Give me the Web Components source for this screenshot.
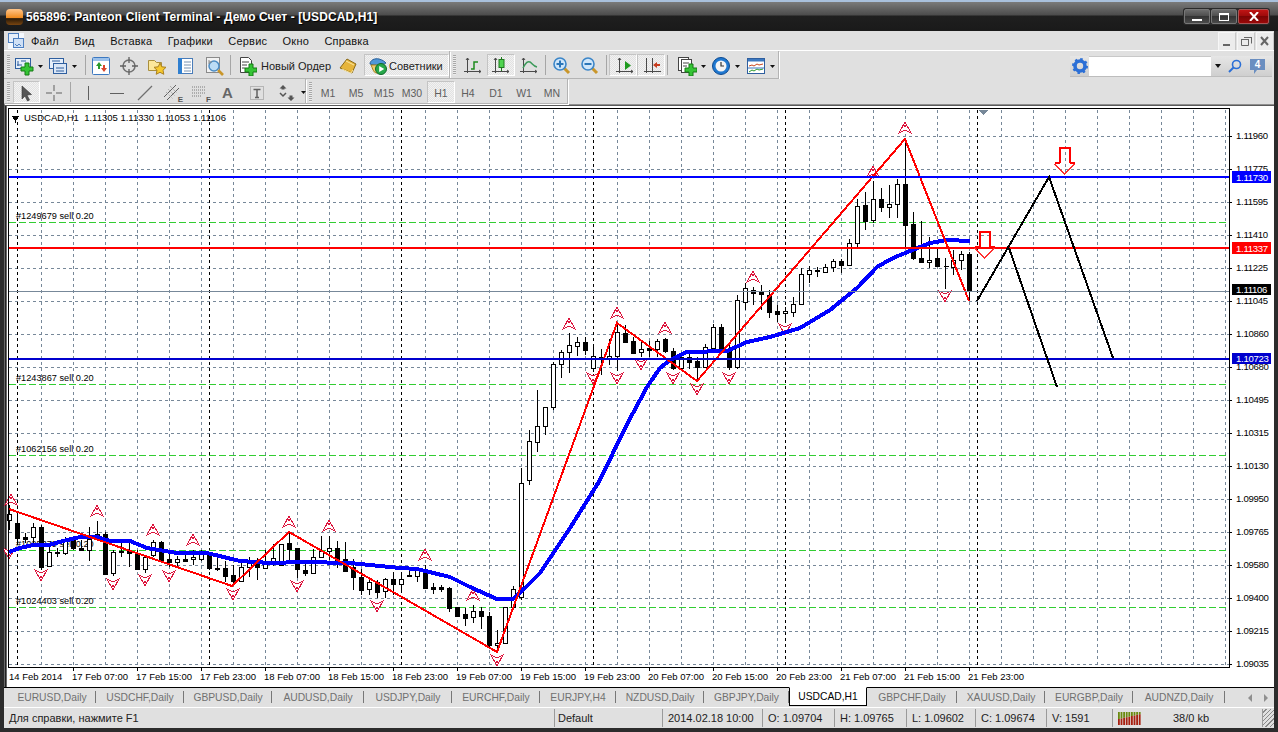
<!DOCTYPE html>
<html>
<head>
<meta charset="utf-8">
<style>
html,body{margin:0;padding:0;background:#2c2c2c;overflow:hidden;}
body{width:1278px;height:732px;display:flex;flex-direction:column;font-family:"Liberation Sans",Arial,sans-serif;font-size:11px;}
</style>
</head>
<body>
<mt-titlebar>565896: Panteon Client Terminal - Демо Счет - [USDCAD,H1]</mt-titlebar>
<mt-menubar>
  <span>Файл</span><span>Вид</span><span>Вставка</span><span>Графики</span><span>Сервис</span><span>Окно</span><span>Справка</span>
</mt-menubar>
<mt-toolrow>
  <mt-toolbar w="446">
    <tb-grip></tb-grip>
    <tb-btn icon="newchart" w="34" pad="1" caret></tb-btn>
    <tb-btn icon="profiles" w="36" pad="1" caret></tb-btn>
    <tb-sep></tb-sep>
    <tb-btn icon="market" w="27" pad="3"></tb-btn>
    <tb-btn icon="target" w="29"></tb-btn>
    <tb-btn icon="folder" w="28" pad="3"></tb-btn>
    <tb-btn icon="book" w="28" pad="3"></tb-btn>
    <tb-btn icon="magdoc" w="28"></tb-btn>
    <tb-sep></tb-sep>
    <tb-btn icon="order" w="100">Новый Ордер</tb-btn>
    <tb-btn icon="tag" w="31" pad="5"></tb-btn>
    <tb-btn icon="experts" w="85" pad="3" tight pressed>Советники</tb-btn>
  </mt-toolbar>
  <mt-toolbar w="329">
    <tb-grip></tb-grip>
    <tb-btn icon="bars" w="28"></tb-btn>
    <tb-btn icon="candle" w="28" pad="3" pressed></tb-btn>
    <tb-btn icon="linechart" w="28"></tb-btn>
    <tb-sep></tb-sep>
    <tb-btn icon="zoomin" w="28"></tb-btn>
    <tb-btn icon="zoomout" w="28"></tb-btn>
    <tb-sep></tb-sep>
    <tb-btn icon="autoscroll" w="28" pad="5" pressed></tb-btn>
    <tb-btn icon="shift" w="28" pad="5" pressed></tb-btn>
    <tb-sep></tb-sep>
    <tb-btn icon="template" w="36" pad="7" caret></tb-btn>
    <tb-btn icon="clock" w="37" pad="5" caret></tb-btn>
    <tb-btn icon="indicator" w="33" pad="3" caret></tb-btn>
  </mt-toolbar>
  <mt-search></mt-search>
</mt-toolrow>
<mt-toolrow second>
  <mt-toolbar w="302">
    <tb-grip></tb-grip>
    <tb-btn icon="cursor" w="27" pad="2" pressed></tb-btn>
    <tb-btn icon="cross" w="28"></tb-btn>
    <tb-sep></tb-sep>
    <tb-btn icon="vline" w="28" pad="5"></tb-btn>
    <tb-btn icon="hline" w="28" pad="6"></tb-btn>
    <tb-btn icon="trend" w="28" pad="6"></tb-btn>
    <tb-btn icon="channel" w="28" pad="5"></tb-btn>
    <tb-btn icon="fibo" w="28" pad="5"></tb-btn>
    <tb-btn icon="letter" w="28" pad="5"></tb-btn>
    <tb-btn icon="textbox" w="28" pad="6"></tb-btn>
    <tb-btn icon="arrows" w="36" pad="8" caret></tb-btn>
  </mt-toolbar>
  <mt-toolbar w="262">
    <tb-grip></tb-grip>
    <tb-btn w="28" tf>M1</tb-btn>
    <tb-btn w="28" tf>M5</tb-btn>
    <tb-btn w="28" tf>M15</tb-btn>
    <tb-btn w="28" tf>M30</tb-btn>
    <tb-btn w="28" tf pressed>H1</tb-btn>
    <tb-btn w="28" tf>H4</tb-btn>
    <tb-btn w="28" tf>D1</tb-btn>
    <tb-btn w="28" tf>W1</tb-btn>
    <tb-btn w="28" tf>MN</tb-btn>
  </mt-toolbar>
</mt-toolrow>
<mt-chart></mt-chart>
<mt-tabs>
  <mt-tab w="88">EURUSD,Daily</mt-tab><mt-tab w="88">USDCHF,Daily</mt-tab><mt-tab w="88">GBPUSD,Daily</mt-tab><mt-tab w="92">AUDUSD,Daily</mt-tab><mt-tab w="88">USDJPY,Daily</mt-tab><mt-tab w="88">EURCHF,Daily</mt-tab><mt-tab w="76">EURJPY,H4</mt-tab><mt-tab w="88">NZDUSD,Daily</mt-tab><mt-tab w="85">GBPJPY,Daily</mt-tab><mt-tab w="78" active>USDCAD,H1</mt-tab><mt-tab w="90">GBPCHF,Daily</mt-tab><mt-tab w="88">XAUUSD,Daily</mt-tab><mt-tab w="88">EURGBP,Daily</mt-tab><mt-tab w="92">AUDNZD,Daily</mt-tab>
</mt-tabs>
<mt-status></mt-status>

<script>
const plus = (x,y) => `<path d="M${x-2} ${y-6}h4v4h4v4h-4v4h-4v-4h-4v-4h4z" fill="#35c435" stroke="#147a14"/>`
const axes = `<path d="M4.5 2v15M1 15.5h17" stroke="#4a4a4a" fill="none"/><path d="M3 4l1.5-2 1.5 2M16 14l2 1.5-2 1.5" stroke="#4a4a4a" fill="none"/>`
const lens = (sign) => `<path d="M12 12l5 5" stroke="#c9962a" stroke-width="3"/><circle cx="8" cy="8" r="6" fill="#cfe6fa" stroke="#3c86c8" stroke-width="1.6"/>${sign}`
const ICONS = {
  newchart:`<rect x="1.5" y="2.5" width="15" height="10" fill="#e6effa" stroke="#2f5f9f"/><path d="M4 5v5M3 9h5M7 5h5" stroke="#2f5f9f" fill="none"/>${plus(13,13)}`,
  profiles:`<rect x="1.5" y="2.5" width="14" height="10" fill="#e6effa" stroke="#2f5f9f"/><rect x="5.5" y="7.5" width="13" height="10" fill="#dbe7f6" stroke="#2f5f9f"/><path d="M4 5h8M8 12h8M8 15h8" stroke="#2f5f9f"/>`,
  market:`<rect x="1.5" y="1.5" width="17" height="17" rx="1" fill="#fff" stroke="#3c78c0"/><rect x="2" y="2" width="16" height="3" fill="#9cc1ea"/><path d="M8 6l3 4H9v3H7v-3H5z" fill="#2a9a2a"/><path d="M12 9h2v3h2l-3 4-3-4h2z" fill="#d8452a"/>`,
  target:`<circle cx="10" cy="10" r="6" fill="none" stroke="#707070" stroke-width="1.5"/><path d="M10 1v6M10 13v6M1 10h6M13 10h6" stroke="#606060" stroke-width="1.3"/>`,
  folder:`<path d="M1.5 4.5h6l2 2h5v8h-13z" fill="#fbe79a" stroke="#a98f3c"/><path d="M13 7l1.8 3.8 4.2.5-3 2.9.8 4.1-3.8-2-3.8 2 .8-4.1-3-2.9 4.2-.5z" fill="#f6c92e" stroke="#a98020"/>`,
  book:`<rect x="3.5" y="2.5" width="14" height="15" fill="#fff" stroke="#4a7cb8"/><rect x="3" y="2" width="4" height="16" fill="#2f7fd0"/><path d="M9 6h7M9 9h7M9 12h7M9 15h7" stroke="#7a93b0"/>`,
  magdoc:`<rect x="2.5" y="1.5" width="13" height="15" fill="#f2f2f2" stroke="#8a8a8a"/><path d="M14 14l5 5" stroke="#c9962a" stroke-width="2.6"/><circle cx="10" cy="10" r="5" fill="#bcdcf5" stroke="#4c8cc4" stroke-width="1.5"/><path d="M5 4v4M5 6h3" stroke="#8a8a8a"/>`,
  order:`<path d="M3.5 1.5h8l3 3v12h-11z" fill="#fff" stroke="#444"/><path d="M5 6h7M5 9h5M5 12h3" stroke="#444"/>${plus(14,14)}`,
  tag:`<path d="M2 12L9 3l9 5-4 9z" fill="#e6b53c" stroke="#8a6a18"/><path d="M4 13l9 4 2-3" fill="none" stroke="#fbe7a0"/><path d="M8 5l8 4" stroke="#fbe7a0"/>`,
  experts:`<path d="M2 8c0-4 5-6 9-5s6 3 7 4c-3 2-11 3-16 1z" fill="#4f97d8" stroke="#2a5f98"/><path d="M3 9c2 4 2 7 5 8h5V9z" fill="#f0cb70" stroke="#a58420"/><circle cx="13" cy="13" r="5.5" fill="#26a84a" stroke="#0f6a2a"/><path d="M11.2 10l5 3-5 3z" fill="#fff"/>`,
  bars:`${axes}<path d="M8 13h3V6h4" fill="none" stroke="#1e8a1e" stroke-width="1.5"/>`,
  candle:`${axes}<path d="M10.5 1v14" stroke="#1e7a1e"/><rect x="8" y="3.5" width="5" height="8" fill="#4fd34f" stroke="#1e7a1e"/>`,
  linechart:`${axes}<path d="M4 12c3-6 5-7 7-6s3 4 7 5" fill="none" stroke="#3c9a5a" stroke-width="1.5"/>`,
  zoomin:lens(`<path d="M4.5 8h7M8 4.500v7" stroke="#2b76b8" stroke-width="2"/>`),
  zoomout:lens(`<path d="M4.500 8h7" stroke="#2b76b8" stroke-width="2"/>`),
  autoscroll:`${axes}<path d="M10 5l6 4.500-6 4.500z" fill="#1e9a1e"/>`,
  shift:`<path d="M3.500 2v15M9.500 2v15M1 15.500h17" stroke="#4a4a4a"/><path d="M17 8h-3V6l-4 3 4 3v-2h3z" fill="#c83c1e"/>`,
  template:`<rect x="1.500" y="1.500" width="10" height="13" fill="#fff" stroke="#444"/><rect x="4.500" y="3.500" width="10" height="13" fill="#fff" stroke="#444"/><path d="M6 7h6M6 10h4" stroke="#444"/>${plus(14,14)}`,
  clock:`<circle cx="10" cy="10" r="8.500" fill="#1f78d0" stroke="#0e4a90"/><circle cx="10" cy="10" r="5.500" fill="#f4f4f4"/><path d="M10 6v4h3" stroke="#333" fill="none" stroke-width="1.2"/>`,
  indicator:`<rect x="1.500" y="2.500" width="17" height="15" fill="#fff" stroke="#2f5f9f"/><rect x="2" y="3" width="16" height="2.500" fill="#3c78c0"/><path d="M3 10l3-1 2 1 3-2 2 1 4-1" fill="none" stroke="#c8461e"/><path d="M3 16l3-2 2 1 3-2 2 1 4-1" fill="none" stroke="#2a9a2a"/><path d="M2 12h16" stroke="#3c78c0"/>`,
  cursor:`<path d="M6 3l0 13 3-3 2.500 5 2-1-2.500-5 4.500-.5z" fill="#555" stroke="#333" stroke-width=".6"/>`,
  cross:`<path d="M10 2v6M10 12v6M2 10h6M12 10h6" stroke="#606060"/>`,
  vline:`<path d="M10.500 3v14" stroke="#606060"/>`,
  hline:`<path d="M3 10.500h14" stroke="#606060"/>`,
  trend:`<path d="M3 17L17 3" stroke="#707070" stroke-width="1.200"/>`,
  channel:`<path d="M2 14L14 2M5 17L17 5" stroke="#606060"/><path d="M6 6l7 7M4 9l7 7M8 3l7 7" stroke="#9a9a9a" stroke-dasharray="1 1"/>`,
  fibo:`<path d="M2 4h14M2 7h14M2 10h14M2 13h10" stroke="#7a7a7a" stroke-dasharray="1 1"/>`,
  letter:``,
  textbox:`<rect x="3.500" y="3.500" width="13" height="13" fill="none" stroke="#8a8a8a" stroke-dasharray="1 1"/><path d="M6.500 6.500h7M10 6.500v8M8 14.500h4" stroke="#606060" stroke-width="1.500" fill="none"/>`,
  arrows:`<path d="M6 2l3.500 3.500H7.500v1h-3v-1H2.500z" fill="#555"/><path d="M3 10l3 3 3-3" stroke="#555" fill="none" stroke-width="1.500"/><path d="M14 18l-3.500-3.500h2v-2h3v2h2z" fill="#555"/>`
}
const FONT = `"Liberation Sans",Arial,sans-serif`

customElements.define('mt-titlebar', class extends HTMLElement {
  constructor(){ super(); this.attachShadow({mode:'open'})
    this.shadowRoot.innerHTML = `
<style>
:host{display:flex;align-items:center;height:29px;padding-top:2px;flex:none;position:relative;
  background:linear-gradient(#a9c0dc 0,#a9c0dc 2px,#7a7a7a 2px,#4c4c4c 15px,#1f1f1f 16px,#1a1a1a 30px);
  color:#fff;font:bold 12px ${FONT};text-shadow:1px 1px 1px #000;}
.logo{width:17px;height:16px;margin:0 3px 0 6px;border-radius:4px;background:linear-gradient(#ffc58a,#ef8a1e 55%,#2a1a08 60%,#7a4510);}
.name{letter-spacing:.1px;white-space:nowrap;}
.btns{display:flex;margin-left:auto;margin-right:8px;padding:1px;gap:1px;background:#2a2a2a;border-radius:3px;}
.b{height:13px;width:24px;border:1px solid #777;border-radius:2px;background:linear-gradient(#6c6c6c,#4a4a4a 50%,#343434 50%,#4a4a4a);display:flex;align-items:center;justify-content:center;}
.close{width:29px;background:linear-gradient(#c01414,#9a0a0a 50%,#7c0404 50%,#9a0808);border-color:#a55;}
</style>
<span class="logo"></span><span class="name"><slot></slot></span>
<div class="btns">
  <div class="b"><svg width="10" height="10"><rect x="0" y="7" width="10" height="2" fill="#fff"/></svg></div>
  <div class="b"><svg width="10" height="8"><rect x=".5" y=".5" width="9" height="7" fill="none" stroke="#fff"/><rect x="0" y="0" width="10" height="2" fill="#fff"/></svg></div>
  <div class="b close"><svg width="10" height="9"><path d="M1 0l8 9M9 0l-8 9" stroke="#fff" stroke-width="2"/></svg></div>
</div>`
  }
})

customElements.define('mt-menubar', class extends HTMLElement {
  constructor(){ super(); this.attachShadow({mode:'open'})
    this.shadowRoot.innerHTML = `
<style>
:host{display:flex;align-items:center;height:19px;flex:none;margin:0 4px;background:#e0e0e0;font:11px ${FONT};color:#111;letter-spacing:.2px;}
.ico{margin:0 7px 0 4px;flex:none;}
.items{display:flex;gap:15.4px;}
.mdi{display:flex;margin-left:auto;margin-right:1px;gap:2px;}
.mdi div{width:16px;height:17px;background:#ececec;border:solid #f7f7f7;border-width:1px 0 0 1px;box-shadow:1px 1px 0 #c8c8c8;}
svg{display:block;}
</style>
<svg class="ico" width="16" height="16"><rect width="16" height="16" fill="#f4f8fd"/><rect x=".5" y=".5" width="10" height="9" fill="#e6effa" stroke="#4d7fc0"/><rect x="5.500" y="5.500" width="10" height="9" fill="#cfe0f5" stroke="#4d7fc0"/><path d="M7 11l2 2 2-2 2 2" stroke="#4d7fc0" fill="none"/></svg>
<div class="items"><slot></slot></div>
<div class="mdi">
  <div><svg width="16" height="17"><rect x="4" y="11" width="7" height="2" fill="#666"/></svg></div>
  <div><svg width="16" height="17"><path d="M6.500 4.500h7v6M3.500 6.500h7v6h-7z" fill="none" stroke="#666"/><path d="M3 6h8v1H3zM6 4h8v1H6z" fill="#666"/></svg></div>
  <div><svg width="16" height="17"><path d="M4 4l7 8M11 4l-7 8" stroke="#666" stroke-width="2"/></svg></div>
</div>`
  }
})

customElements.define('mt-toolrow', class extends HTMLElement {
  constructor(){ super(); this.attachShadow({mode:'open'})
    this.shadowRoot.innerHTML = `
<style>
:host{display:flex;flex:none;margin:0 4px;height:28px;background:#e0e0e0;border-top:1px solid #fff;}
:host([second]){height:25px;border-top:0;border-bottom:1px solid #8f8f8f;}
</style><slot></slot>`
  }
})

customElements.define('mt-toolbar', class extends HTMLElement {
  connectedCallback(){ this.style.width = this.getAttribute('w') + 'px' }
  constructor(){ super(); this.attachShadow({mode:'open'})
    this.shadowRoot.innerHTML = `
<style>
:host{display:flex;align-items:center;flex:none;box-sizing:border-box;padding-top:1px;border-right:1px solid #b4b4b4;border-bottom:1px solid #b4b4b4;box-shadow:1px 1px 0 #fff;}
</style><slot></slot>`
  }
})

customElements.define('tb-grip', class extends HTMLElement {
  constructor(){ super(); this.attachShadow({mode:'open'})
    this.shadowRoot.innerHTML = `<style>:host{display:block;flex:none;width:3px;height:20px;margin:0 3px 0 3px;background:repeating-linear-gradient(#a8a8a8 0 1px,#ececec 1px 2px);}</style>`
  }
})

customElements.define('tb-sep', class extends HTMLElement {
  constructor(){ super(); this.attachShadow({mode:'open'})
    this.shadowRoot.innerHTML = `<style>:host{display:block;flex:none;width:1px;height:20px;margin:0 2px;background:#a6a6a6;}</style>`
  }
})

customElements.define('tb-btn', class extends HTMLElement {
  constructor(){ super(); this.attachShadow({mode:'open'})
    const name = this.getAttribute('icon')
    const svg = name ? `<svg class="ic" width="20" height="20" viewBox="0 0 20 20">${ICONS[name]}</svg>` : ''
    const letter = name == 'letter' ? '<b class="big">A</b>' : ''
    const tag = name == 'channel' ? '<b class="sub">E</b>' : name == 'fibo' ? '<b class="sub">F</b>' : ''
    const caret = this.hasAttribute('caret') ? `<svg class="caret" width="5" height="3"><path d="M0 0h5L2.500 3z" fill="#111"/></svg>` : ''
    const pad = this.getAttribute('pad') || 4
    this.shadowRoot.innerHTML = `
<style>
:host{display:flex;align-items:center;flex:none;height:22px;box-sizing:border-box;position:relative;padding-left:${pad}px;font:11px ${FONT};color:#222;width:${this.getAttribute('w')}px;white-space:nowrap;}
:host([tf]){justify-content:center;padding:2px 2px 0 0;color:#5e5e5e;font-size:10.500px;}
:host([tf][pressed]){padding-right:0;}
:host([pressed]){background:#ebebeb;background-image:repeating-conic-gradient(#e2e2e2 0 25%,#f2f2f2 0 50%);background-size:2px 2px;border:1px solid;border-color:#c4c4c4 #fff #fff #c4c4c4;}
svg{display:block;flex:none;}
.ic{margin-top:2px;}
.caret{margin-left:auto;margin-right:6px;margin-top:2px;}
span{margin-left:4px;margin-top:2px;}
:host([tf]) span{margin:0;}
:host([tight]) span{margin-left:1px;}
.big{width:20px;text-align:center;font:bold 15px ${FONT};color:#666;margin-top:2px;}
.sub{position:absolute;right:2px;bottom:-1px;font:bold 8px ${FONT};color:#555;}
</style>
${letter || svg}${tag}<span><slot></slot></span>${caret}`
  }
})

customElements.define('mt-search', class extends HTMLElement {
  constructor(){ super(); this.attachShadow({mode:'open'})
    this.shadowRoot.innerHTML = `
<style>
:host{display:flex;flex:none;height:20px;margin:5px 2px 0 auto;border-bottom:1px solid #bdbdbd;}
.c{height:20px;background:linear-gradient(#e6e6e6,#cfcfcf);display:flex;align-items:center;justify-content:center;box-sizing:border-box;}
.input{width:122px;background:#fff;border-top:1px solid #c8c8c8;}
svg{display:block;}
</style>
<div class="c" style="width:19px"><svg width="16" height="16"><circle cx="8" cy="8" r="5" fill="none" stroke="#2b6fd6" stroke-width="3.600"/><circle cx="8" cy="8" r="7" fill="none" stroke="#2b6fd6" stroke-width="2" stroke-dasharray="2.500 3"/></svg></div>
<div class="c input"></div>
<div class="c" style="width:14px"><svg width="6" height="4"><path d="M0 0h6L3 4z" fill="#111"/></svg></div>
<div class="c" style="width:19px"><svg width="15" height="15"><circle cx="9.500" cy="5.500" r="4" fill="none" stroke="#2b6fd6" stroke-width="1.600"/><path d="M6.500 8.500L2 13" stroke="#2b6fd6" stroke-width="2"/></svg></div>
<div class="c" style="width:28px"><svg width="18" height="17"><path d="M1 1h15v11H8l-3 4v-4H1z" fill="#6a8ec0"/><text x="8.500" y="10" text-anchor="middle" font-family="Liberation Sans" font-size="10" font-weight="bold" fill="#fff">4</text></svg></div>`
  }
})

// y пикселями: high, верх тела, низ тела, low, цвет
const BARS = `505,514,520,530,w 512,523,538,545,b 533,537,539,543,b 523,527,537,545,w 525,527,567,570,b 546,552,566,567,w 548,552,553,557,b 537,539,553,555,w 537,539,548,550,b 540,548,550,551,b 527,539,550,561,w 521,534,539,540,w 532,534,574,575,b 550,552,573,576,w 543,551,552,557,b 540,551,553,567,b 550,553,569,570,b 555,557,569,573,w 540,542,555,557,w 541,542,560,562,b 554,559,562,567,b 556,559,562,567,w 555,559,561,562,b 550,557,559,565,w 550,554,559,561,w 553,555,568,570,b 557,568,569,571,b 561,568,576,582,b 565,575,581,583,b 559,567,581,582,w 557,563,567,577,w 558,563,567,580,b 550,563,568,569,w 544,558,563,566,w 544,544,565,566,w 532,543,549,560,b 548,548,569,578,b 561,570,573,576,b 549,557,573,574,w 536,551,557,557,w 536,548,551,560,w 541,548,561,568,b 542,559,571,572,b 559,567,577,590,b 569,577,590,595,b 578,582,589,595,w 580,582,592,598,b 578,579,591,598,w 572,579,584,595,b 572,579,584,593,w 570,575,576,577,b 567,570,576,582,w 565,573,588,588,b 583,587,589,594,b 585,587,589,592,b 587,588,608,612,b 607,607,616,616,b 608,614,618,626,b 605,611,617,623,w 607,611,616,629,b 612,616,645,647,b 630,643,645,653,w 607,607,643,644,w 586,589,607,610,w 468,483,597,600,w 430,441,480,485,w 390,426,442,452,w 407,407,426,435,w 362,364,407,410,w 350,352,364,378,w 333,345,352,373,w 337,342,346,356,w 337,342,350,355,b 347,356,368,372,w 349,357,359,375,b 339,356,358,365,w 323,332,356,371,w 325,333,342,343,b 337,341,353,354,b 342,349,352,357,w 341,348,350,357,b 339,341,349,357,w 338,339,351,353,b 348,351,368,370,b 352,357,368,370,w 352,357,362,369,b 357,361,367,380,b 344,347,367,368,w 324,327,348,350,w 324,327,350,352,b 343,350,367,370,b 295,300,367,369,w 283,288,302,310,w 287,290,293,305,b 285,292,294,310,b 290,295,312,318,b 305,311,314,322,b 307,311,313,322,w 297,304,312,317,w 268,274,304,305,w 266,270,274,283,w 267,270,271,277,b 264,267,272,272,w 259,261,267,272,w 259,261,265,273,b 239,243,265,266,w 199,206,243,247,w 192,205,221,230,b 181,199,220,223,w 188,199,207,212,b 185,204,207,218,w 179,184,204,218,w 139,184,225,248,b 212,224,258,260,b 221,258,262,263,b 237,260,262,268,w 249,258,266,267,b 258,266,266,289,b 250,260,267,275,w 251,254,260,270,w 252,254,291,301,b`.split(' ').map(s => s.split(','))

const UP_MARKS = [[11,500],[97,511],[153,530],[193,540],[289,522],[329,526],[425,555],[473,595],[569,324],[617,313],[665,328],[753,277],[873,172],[905,128]]
const DN_MARKS = [[9,553],[41,575],[113,584],[145,580],[169,576],[233,594],[297,586],[377,606],[497,660],[593,378],[617,378],[641,364],[673,378],[697,389],[729,378],[785,329],[945,296]]
const MA = [[9,552],[20,548],[33,545],[49,545],[63,541],[80,537],[97,537],[110,541],[130,541],[147,548],[177,553],[207,553],[240,561],[270,563],[303,562],[350,563],[400,568],[417,569],[450,577],[470,587],[497,599],[513,599],[527,586],[540,573],[570,528],[600,480],[613,453],[633,413],[647,387],[660,368],[670,360],[687,352],[727,351],[747,342],[770,337],[800,328],[830,310],[857,288],[877,267],[893,258],[910,251],[930,243],[947,240],[970,241]]
const ZIG = '9,509 232,586 289,532 497,652 617,323 697,381 905,139 969,301'
const SELLS = [['#1249679',222],['#1243867',384],['#1062156',455],['#1025379',550],['#1024403',607]]
const PRICES = ['1.11960','1.11775','1.11595','1.11410','1.11225','1.11045','1.10860','1.10680','1.10495','1.10315','1.10130','1.09950','1.09765','1.09580','1.09400','1.09215','1.09035']
const TIMES = ['17 Feb 07:00','17 Feb 15:00','17 Feb 23:00','18 Feb 07:00','18 Feb 15:00','18 Feb 23:00','19 Feb 07:00','19 Feb 15:00','19 Feb 23:00','20 Feb 07:00','20 Feb 15:00','20 Feb 23:00','21 Feb 07:00','21 Feb 15:00','21 Feb 23:00']
const TAGS = [[177,'#0000ff','1.11730',171,12],[248,'#ff0000','1.11337',242,12],[291,'#000','1.11106',284,11],[359,'#0000cd','1.10723',353,11]]

customElements.define('mt-chart', class extends HTMLElement {
  constructor(){ super(); this.attachShadow({mode:'open'})
    let g = ''
    // сетка
    for (let x=41.5; x<1229; x+=32) g += `<path d="M${x} 110V667" class="grid"/>`
    for (let y=136.5; y<667; y+=33) g += `<path d="M9 ${y}H1229" class="grid"/>`
    for (let x=17.5; x<1000; x+=192) g += `<path d="M${x} 110V667" class="sep"/>`
    for (const [id,y] of SELLS) {
      g += `<path d="M9 ${y+.5}H1229" class="green"/>`
      g += `<text x="16" y="${y-3.5}" class="sell">${id} sell 0.20</text>`
    }
    // свечи
    BARS.forEach((b,k) => {
      const x = 9.5 + 8*k, hi=+b[0], top=+b[1], bot=+b[2], lo=+b[3]
      g += `<path d="M${x} ${hi}V${lo}" stroke="#000" fill="none"/>`
      if (bot-top < 1) g += `<path d="M${x-2} ${top+.5}h5" stroke="#000"/>`
      else g += `<rect x="${x-2}" y="${top+.5}" width="4" height="${bot-top}" fill="${b[4]=='w'?'#fff':'#000'}" stroke="#000"/>`
    })
    // фракталы
    for (const [x,y] of UP_MARKS) g += `<path d="M${x} ${y-6}l-6 11 6-3 6 3z" class="mark"/><path d="M${x} ${y-5}l-1.500 5 1.500-1 1.500 1z" class="core"/>`
    for (const [x,y] of DN_MARKS) g += `<path d="M${x} ${y+6}l-6-11 6 3 6-3z" class="mark"/><path d="M${x} ${y+5}l-1.500-5 1.500 1 1.500-1z" class="core"/>`
    g += `<polyline points="${MA.map(p=>p.join(',')).join(' ')}" fill="none" stroke="#0000ff" stroke-width="4"/>`
    g += `<polyline points="${ZIG}" fill="none" stroke="#ff0000" stroke-width="2"/>`
    // уровни
    g += `<path d="M9 291.500H1229" stroke="#778899"/>`
    g += `<path d="M9 177H1229" stroke="#0000ff" stroke-width="2"/>`
    g += `<path d="M9 248H1229" stroke="#ff0000" stroke-width="2"/>`
    g += `<path d="M9 359H1229" stroke="#0000cd" stroke-width="2"/>`
    g += `<path d="M977 301L1049 177L1113 358M1009 248L1057 387" fill="none" stroke="#000" stroke-width="2"/>`
    for (const [x,y] of [[1064.500,148],[984.500,232]]) {
      g += `<path d="M${x-5} ${y+15}V${y}h10v15M${x-10} ${y+15}h5M${x+5} ${y+15}h5" fill="none" stroke="#ff0000" stroke-width="2"/>`
      g += `<path d="M${x-10} ${y+16}l10 10 10-10" fill="none" stroke="#ff3030"/>`
    }
    g += `<path d="M978 110h11l-5.500 5z" fill="#778899"/>`
    // рамка и заголовок
    g += `<rect x="8.500" y="108.500" width="1221" height="559" fill="none" stroke="#000"/>`
    g += `<path d="M12 116h7l-3.500 4.500zM15 119v4" fill="#000" stroke="#000"/>`
    g += `<text x="24" y="121" class="head">USDCAD,H1  1.11305 1.11330 1.11053 1.11106</text>`
    // шкала цен
    PRICES.forEach((p,i) => {
      const y = 136.5 + 33*i
      g += `<path d="M1229 ${y}h3" stroke="#000"/><text x="1236" y="${y+2}" class="ax">${p}</text>`
    })
    for (const [y,col,txt,ty,h] of TAGS)
      g += `<rect x="1232" y="${ty}" width="39" height="${h}" fill="${col}"/><text x="1236" y="${ty+h-2}" class="ax tagtxt">${txt}</text>`
    // шкала времени
    g += `<text x="9" y="680">14 Feb 2014</text>`
    TIMES.forEach((t,i) => {
      const x = 73.5 + 64*i
      g += `<path d="M${x} 667v4" stroke="#000"/><text x="${x-1.500}" y="680">${t}</text>`
    })
    this.shadowRoot.innerHTML = `
<style>
:host{display:block;flex:none;margin:0 4px;height:582px;background:#fff;}
svg{display:block;shape-rendering:crispEdges;font:9.500px ${FONT};}
text{fill:#000;white-space:pre;}
.ax{font-size:9.600px;letter-spacing:-.3px;}
.sell{font-size:9.200px;}
.tagtxt{fill:#fff;}
.grid{stroke:#778899;stroke-dasharray:3 3;fill:none;}
.sep{stroke:#000;stroke-dasharray:3 3;fill:none;}
.green{stroke:#32cd32;stroke-dasharray:7 3;fill:none;}
.mark{fill:#fff;stroke:#dc143c;}
.core{fill:#dc143c;}
</style>
<svg width="1270" height="582" viewBox="4 105 1270 582">
  <rect x="4" y="105" width="3" height="582" fill="#6a6a6a"/><rect x="4" y="105" width="1270" height="1" fill="#5a5a5a"/>
  <rect x="5" y="106" width="1" height="581" fill="#222"/>
  ${g}
</svg>`
  }
})

customElements.define('mt-tabs', class extends HTMLElement {
  constructor(){ super(); this.attachShadow({mode:'open'})
    this.shadowRoot.innerHTML = `
<style>
:host{display:flex;flex:none;margin:0 4px;height:20px;box-sizing:border-box;padding-left:4px;background:#e0e0e0;border-top:1px solid #000;align-items:stretch;font:10.300px ${FONT};}
.arrows{display:flex;align-items:center;margin-left:auto;gap:12px;padding-right:6px;}
svg{display:block;}
</style>
<slot></slot>
<div class="arrows"><svg width="4" height="8"><path d="M4 0v8L0 4z" fill="#8f8f8f"/></svg><svg width="4" height="8"><path d="M0 0v8l4-4z" fill="#8f8f8f"/></svg></div>`
  }
})

customElements.define('mt-tab', class extends HTMLElement {
  constructor(){ super(); this.attachShadow({mode:'open'})
    this.shadowRoot.innerHTML = `
<style>
:host{display:flex;align-items:center;justify-content:center;flex:none;box-sizing:border-box;position:relative;color:#707070;width:${this.getAttribute('w')}px;}
:host(:not([active]))::after{content:"";position:absolute;right:0;top:3px;height:12px;width:1px;background:#777;}
:host([active]){background:#fff;color:#000;margin-top:-1px;height:19px;border:1px solid #000;border-top:1px solid #fff;}
</style><slot></slot>`
  }
})

customElements.define('mt-status', class extends HTMLElement {
  constructor(){ super(); this.attachShadow({mode:'open'})
    const bars = [0,1,2,3,4,5,6,7,8].map(i => `<rect x="${i*2.600}" y="${7-i*.6}" width="1.800" height="${6+i*.6}" fill="#a82010"/><rect x="${i*2.600}" y="0" width="1.800" height="${7-i*.6}" fill="#6a8a10"/>`).join('')
    this.shadowRoot.innerHTML = `
<style>
:host{display:grid;flex:none;margin:0 4px;height:21px;box-sizing:border-box;border-top:1px solid #fff;background:#e0e0e0;font:11px ${FONT};color:#222;
  grid-template-columns:551px 108px 100px 72px 72px 69px 71px 66px 150px 1fr;align-items:stretch;}
div{display:flex;align-items:center;padding-left:5px;border-right:1px solid #9a9a9a;white-space:nowrap;margin:1px 0;}
div:first-child{padding-left:1px;color:#000;}
.n{padding-left:3px;}
.last{border:0;padding:0;background:repeating-linear-gradient(135deg,#e0e0e0 0 2px,#8a8a8a 2px 3px);}
svg{display:block;margin-right:31px;}
</style>
<div>Для справки, нажмите F1</div>
<div class="n">Default</div>
<div>2014.02.18 10:00</div>
<div>O: 1.09704</div>
<div>H: 1.09765</div>
<div>L: 1.09602</div>
<div>C: 1.09674</div>
<div>V: 1591</div>
<div><svg width="24" height="13">${bars}</svg>38/0 kb</div>
<div class="last"></div>`
  }
})
</script>
</body>
</html>
